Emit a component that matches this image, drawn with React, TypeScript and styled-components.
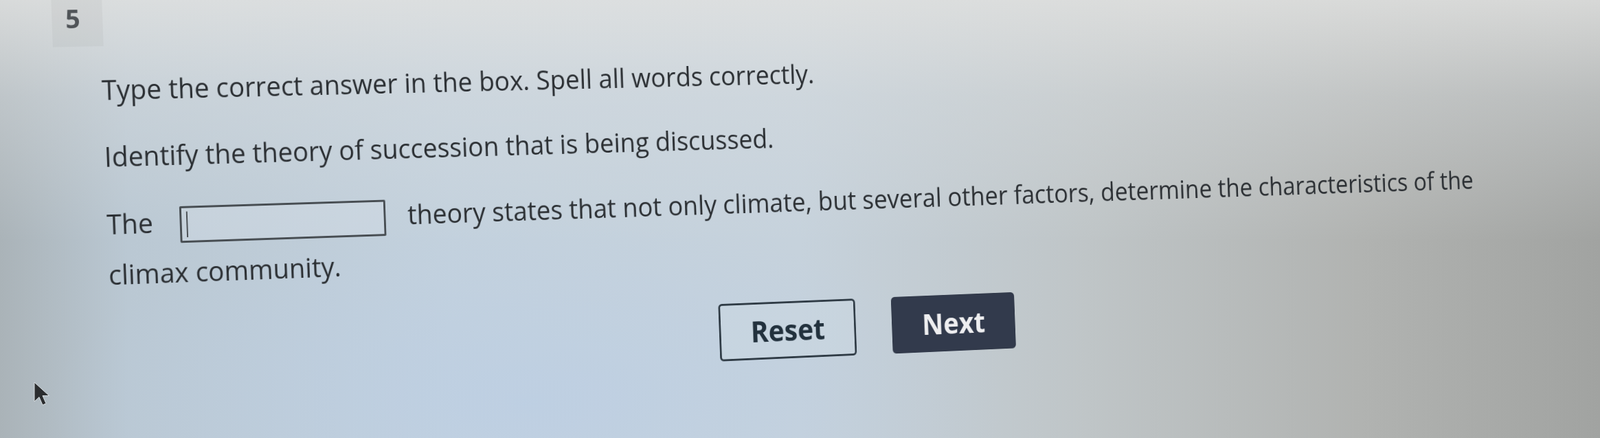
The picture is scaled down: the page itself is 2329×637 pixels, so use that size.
import React from "react";
import styled, { createGlobalStyle } from "styled-components";

const GlobalStyle = createGlobalStyle`
  html, body {
    margin: 0;
    padding: 0;
    width: 100%;
    height: 100%;
    overflow: hidden;
  }
  body {
    font-family: "Open Sans", "Noto Sans", sans-serif;
  }
`;

const Page = styled.div`
  position: relative;
  width: 2329px;
  height: 637px;
  overflow: hidden;
  background:
    radial-gradient(ellipse 1000px 380px at 33% 92%, rgba(186, 206, 230, 0.6), rgba(186, 206, 230, 0) 70%),
    linear-gradient(to bottom, rgba(224, 225, 224, 0.85) 0%, rgba(216, 220, 222, 0.45) 22%, rgba(200, 210, 218, 0) 55%),
    linear-gradient(to right, #aab3b8 0%, #bac8d3 8%, #c3d1dd 28%, #c6d2dc 50%, #bfc5c7 68%, #b1b3b1 85%, #a1a3a1 100%);
`;

/* the photo is taken slightly from the left and tilted: a perspective tilt of the whole screen */
const Stage = styled.div`
  width: 2700px;
  transform-origin: 0 0;
  transform: rotate(-0.92deg) skewX(1.2deg) perspective(2000px) rotateY(5.74deg);
  color: #2b2f33;
  filter: blur(0.45px);
`;

const Header = styled.div`
  display: flex;
  padding-left: 75px;
`;

const NumberBadge = styled.div`
  box-sizing: border-box;
  width: 75px;
  height: 70px;
  padding: 9px 0 0 20px;
  background: rgba(120, 120, 120, 0.07);
  font-size: 38px;
  line-height: 38px;
  font-weight: 700;
  color: #505458;
`;

const Content = styled.div`
  width: 2395px;
  padding-left: 145px;
  margin-top: 36px;
`;

const Para = styled.p<{ $gap: number; $lh?: number }>`
  max-width: 2315px;
  margin: ${(p) => p.$gap}px 0 0 0;
  font-size: 40px;
  line-height: ${(p) => p.$lh ?? 56}px;
  font-weight: 400;
`;

const AnswerBox = styled.span`
  position: relative;
  display: inline-block;
  vertical-align: middle;
  box-sizing: border-box;
  width: 314px;
  height: 54px;
  margin: 0 34px 0 40px;
  border: 3px solid #474d52;
  border-radius: 2px;
  background: rgba(214, 224, 232, 0.35);
`;

const Caret = styled.span`
  position: absolute;
  left: 7px;
  top: 5px;
  bottom: 5px;
  width: 2px;
  background: #4a4f54;
`;

const ButtonRow = styled.div`
  display: flex;
  justify-content: center;
  align-items: flex-start;
  gap: 60px;
  margin-top: 42px;
  padding-right: 12px;
`;

const Button = styled.button<{ $primary?: boolean }>`
  box-sizing: border-box;
  width: ${(p) => (p.$primary ? 208 : 225)}px;
  height: 88px;
  border-radius: 6px;
  border: 3px solid ${(p) => (p.$primary ? "#323a4b" : "#2f3b45")};
  background: ${(p) => (p.$primary ? "#323a4c" : "rgba(205, 217, 227, 0.45)")};
  color: ${(p) => (p.$primary ? "#eeeef0" : "#22313d")};
  font-family: "Open Sans", "Noto Sans", sans-serif;
  font-size: 44px;
  line-height: 1;
  font-weight: 700;
  padding: 0;
  cursor: pointer;
`;

const Pointer = styled.svg`
  position: absolute;
  left: 48px;
  top: 555px;
  width: 25px;
  height: 36px;
`;

export default function App() {
  return (
    <>
      <GlobalStyle />
      <Page>
        <Stage>
          <Header>
            <NumberBadge>5</NumberBadge>
          </Header>
          <Content>
            <Para $gap={0}>Type the correct answer in the box. Spell all words correctly.</Para>
            <Para $gap={42}>Identify the theory of succession that is being discussed.</Para>
            <Para $gap={34} $lh={74}>
              The
              <AnswerBox>
                <Caret />
              </AnswerBox>
              theory states that not only climate, but several other factors, determine the characteristics of the climax community.
            </Para>
            <ButtonRow>
              <Button type="button">Reset</Button>
              <Button type="button" $primary>
                Next
              </Button>
            </ButtonRow>
          </Content>
        </Stage>
        <Pointer viewBox="0 0 25 36">
          <path d="M2 1 L2 29 L9 22.5 L14 34 L19 31.8 L14 20.5 L23.5 20.5 Z" fill="#2b2d2f" stroke="#d7dde0" strokeWidth="1" />
        </Pointer>
      </Page>
    </>
  );
}
